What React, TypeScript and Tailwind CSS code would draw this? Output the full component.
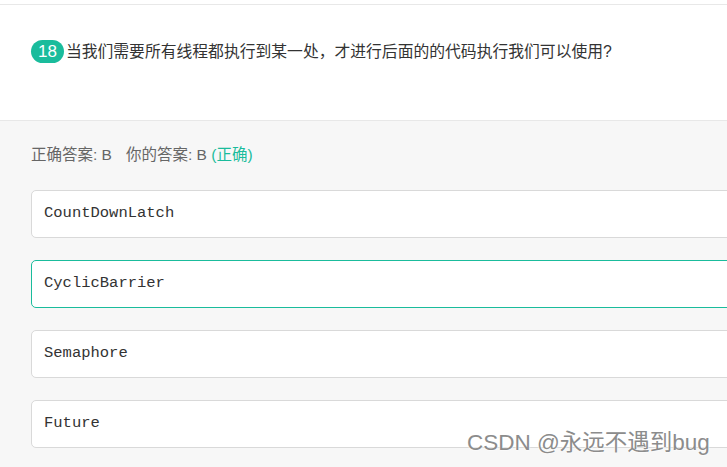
import React from "react";

const options = ["CountDownLatch", "CyclicBarrier", "Semaphore", "Future"];

export default function App() {
  return (
    <div
      className="relative w-[727px] h-[467px] overflow-hidden bg-[#f7f7f7]"
      style={{ fontFamily: '"Liberation Sans", "Noto Sans CJK SC", sans-serif' }}
    >
      <div className="h-[4px] bg-white" />
      <div className="h-[117px] bg-white border-t border-b border-[#e8e8e8] flex items-start pt-[35px] pl-[31px]">
        <div className="flex items-center">
          <span className="h-[23px] px-[7px] rounded-full bg-[#1abc9c] text-white text-[17px] leading-[23px] flex items-center">
            18
          </span>
          <span className="ml-[2px] text-[15.8px] text-[#333] leading-[23px]">
            当我们需要所有线程都执行到某一处，才进行后面的的代码执行我们可以使用?
          </span>
        </div>
      </div>
      <div className="pl-[31px] pt-[24px]">
        <div className="text-[15.5px] text-[#666] leading-[20px] h-[20px] flex">
          <span>正确答案: B</span>
          <span className="ml-[14px]">
            你的答案: B <span className="text-[#1abc9c]">(正确)</span>
          </span>
        </div>
        <div className="mt-[25px] flex flex-col gap-[22px]">
          {options.map((o, i) => (
            <div
              key={o}
              className={
                "w-[760px] h-[48px] rounded-[5px] bg-white border flex items-center pl-[12px] text-[15.5px] text-[#333] " +
                (i === 1 ? "border-[#1abc9c]" : "border-[#d9d9d9]")
              }
              style={{ fontFamily: '"Liberation Mono", "Courier New", monospace' }}
            >
              {o}
            </div>
          ))}
        </div>
      </div>
      <div
        className="absolute left-[467px] top-[428px] text-[22.5px] text-[#8c8c8c] leading-[30px]"
        style={{ textShadow: "0 0 2px #fff, 0 0 2px #fff" }}
      >
        CSDN @永远不遇到bug
      </div>
    </div>
  );
}
